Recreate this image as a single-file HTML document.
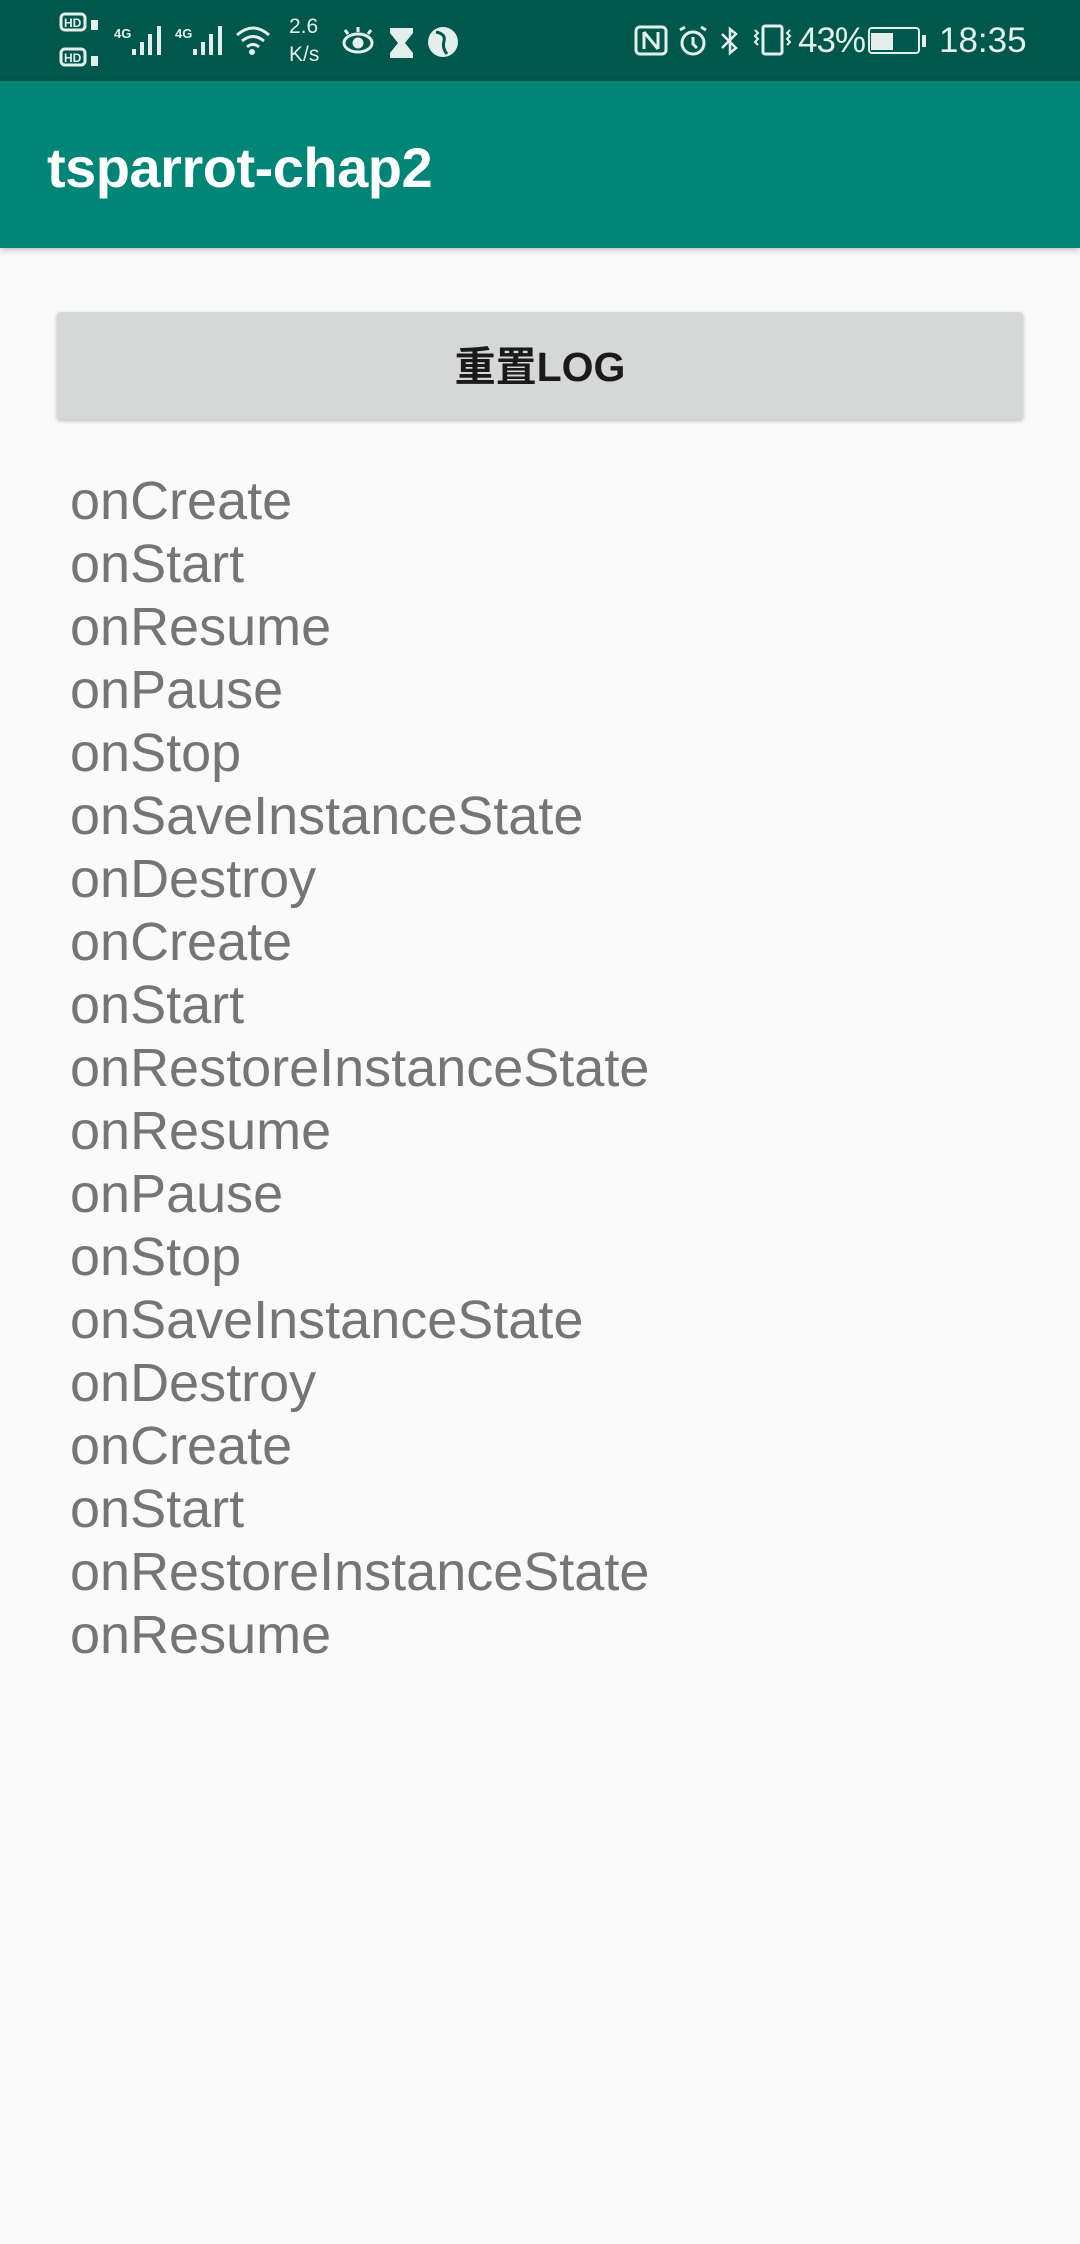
<!DOCTYPE html>
<html><head><meta charset="utf-8">
<style>
html,body{margin:0;padding:0}
body{width:1080px;height:2244px;background:#fafafa;position:relative;overflow:hidden;font-family:"Liberation Sans","Noto Sans CJK SC",sans-serif}
.sb{position:absolute;left:0;top:0;width:1080px;height:81px;background:#00574b;color:#e4efec}
.ab{position:absolute;left:0;top:81px;width:1080px;height:167px;background:#008577;box-shadow:0 2px 6px rgba(0,0,0,.25)}
.title{position:absolute;left:47px;top:136px;font-size:56px;font-weight:bold;color:#fff;line-height:64px;letter-spacing:-0.5px}
.btn{position:absolute;left:57px;top:312px;width:966px;height:107px;background:#d6d7d7;border-radius:3px;box-shadow:0 2px 4px rgba(0,0,0,.25);text-align:center;line-height:110px;font-size:41px;font-weight:bold;color:#1a1a1a}
.log{position:absolute;left:70px;top:470px;font-size:54px;line-height:63px;color:#757575}
.t{position:absolute;color:#e4efec}
</style></head><body>
<div class="sb">
<svg width="1080" height="81" style="position:absolute;left:0;top:0" fill="none" stroke="#e4efec">
<rect x="61" y="14" width="24" height="16" rx="4" stroke-width="3"/>
<rect x="61" y="49" width="24" height="16" rx="4" stroke-width="3"/>
<text x="64" y="27" font-size="12" font-weight="bold" fill="#e4efec" stroke="none">HD</text>
<text x="64" y="62" font-size="12" font-weight="bold" fill="#e4efec" stroke="none">HD</text>
<rect x="91" y="20" width="7" height="10" fill="#e4efec" stroke="none"/>
<rect x="91" y="56" width="7" height="10" fill="#e4efec" stroke="none"/>
<g fill="#e4efec" stroke="none">
<rect x="132" y="49" width="4" height="6"/><rect x="140" y="42" width="4" height="13"/><rect x="148" y="34" width="4" height="21"/><rect x="157" y="26" width="4" height="29"/>
<rect x="193" y="49" width="4" height="6"/><rect x="201" y="42" width="4" height="13"/><rect x="209" y="34" width="4" height="21"/><rect x="218" y="26" width="4" height="29"/>
<circle cx="252" cy="52" r="3"/>
<path d="M390 28h23v5l-8 10 8 10v5h-23v-5l8-10-8-10z"/>
<circle cx="443" cy="42" r="15"/>
<rect x="871" y="33" width="22" height="17"/>
<rect x="922" y="35" width="4" height="12"/>
</g>
<path d="M436 32q10 2 8 9t3 13" stroke="#00574b" stroke-width="3"/>
<text x="114" y="38" font-size="13" fill="#e4efec" stroke="none" font-weight="bold">4G</text>
<text x="175" y="38" font-size="13" fill="#e4efec" stroke="none" font-weight="bold">4G</text>
<path d="M237 35q16-14 32 0M242 41q11-9 22 0M247 47q6-5 12 0" stroke-width="3"/>
<ellipse cx="358" cy="43" rx="14" ry="9" stroke-width="3"/><circle cx="358" cy="43" r="5" fill="#e4efec"/>
<path d="M345 30l3 4M358 27v5M371 30l-3 4" stroke-width="3"/>
<rect x="636" y="27" width="30" height="27" rx="4" stroke-width="3"/>
<path d="M644 32v17M658 32v17M644 32l14 17" stroke-width="3"/>
<circle cx="693" cy="43" r="11" stroke-width="3"/><path d="M693 37v7l4 4M680 30l5-3M706 30l-5-3" stroke-width="3"/>
<path d="M722 34l14 14-6 5v-24l6 5-14 14" stroke-width="2.5"/>
<rect x="763" y="26" width="19" height="28" rx="2" stroke-width="3"/>
<path d="M755 30l3 3-3 3 3 3-3 3 3 3M790 30l-3 3 3 3-3 3 3 3-3 3" stroke-width="2"/>
<rect x="869" y="28" width="50" height="25" rx="3" stroke-width="2"/>
</svg>
<div class="t" style="left:289px;top:15px;font-size:21px;line-height:24px">2.6</div>
<div class="t" style="left:289px;top:43px;font-size:21px;line-height:24px">K/s</div>
<div class="t" style="left:798px;top:21px;font-size:35px;line-height:40px;letter-spacing:-1px">43%</div>
<div class="t" style="left:939px;top:21px;font-size:35px;line-height:40px">18:35</div>
</div>
<div class="ab"></div>
<div class="title">tsparrot-chap2</div>
<div class="btn">重置LOG</div>
<div class="log">onCreate<br>onStart<br>onResume<br>onPause<br>onStop<br>onSaveInstanceState<br>onDestroy<br>onCreate<br>onStart<br>onRestoreInstanceState<br>onResume<br>onPause<br>onStop<br>onSaveInstanceState<br>onDestroy<br>onCreate<br>onStart<br>onRestoreInstanceState<br>onResume</div>
</body></html>
